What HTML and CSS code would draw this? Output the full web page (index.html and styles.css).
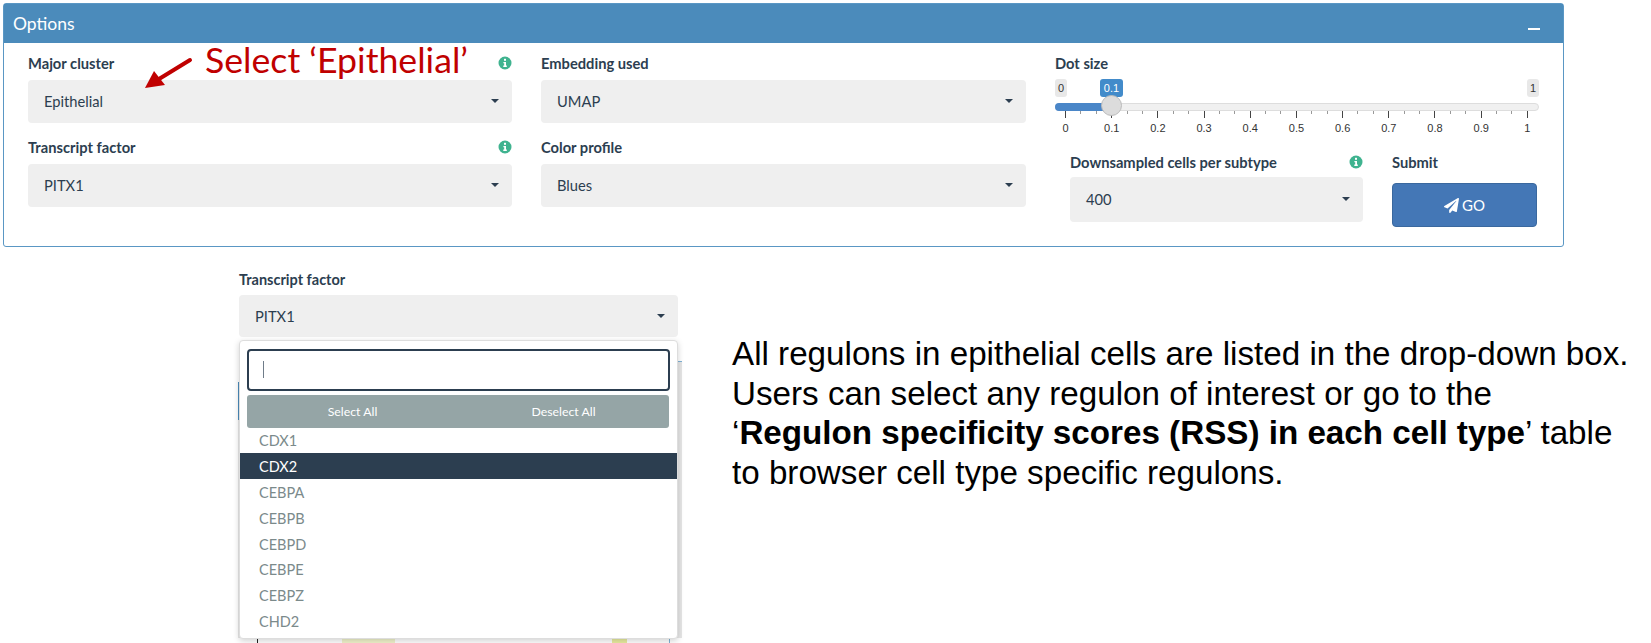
FILE: index.html
```html
<!DOCTYPE html>
<html lang="en">
<head>
    <meta charset="UTF-8">
    <meta name="viewport" content="width=device-width, initial-scale=1.0">
    <title>Options</title>
    <link rel="stylesheet" href="styles.css">
</head>
<body>
    <section class="panel">
        <div class="panel-head">
            <span>Options</span>
            <span class="collapse"></span>
        </div>
        <div class="panel-body">
            <div class="col">
                <div class="field">
                    <div class="label-row">
                        <label>Major cluster</label>
                        <svg class="info" viewBox="0 0 14 14"><circle cx="7" cy="7" r="6.5"/><rect x="6" y="2.8" width="2" height="2"/><path d="M5.4 5.9H8v3.6h.8v1.4H5.3V9.500h.9V7.300h-.8z"/></svg>
                    </div>
                    <div class="select"><span>Epithelial</span><i class="caret"></i></div>
                </div>
                <div class="field">
                    <div class="label-row">
                        <label>Transcript factor</label>
                        <svg class="info" viewBox="0 0 14 14"><circle cx="7" cy="7" r="6.5"/><rect x="6" y="2.8" width="2" height="2"/><path d="M5.4 5.9H8v3.6h.8v1.4H5.3V9.500h.9V7.300h-.8z"/></svg>
                    </div>
                    <div class="select"><span>PITX1</span><i class="caret"></i></div>
                </div>
            </div>
            <div class="col">
                <div class="field">
                    <div class="label-row"><label>Embedding used</label></div>
                    <div class="select"><span>UMAP</span><i class="caret"></i></div>
                </div>
                <div class="field">
                    <div class="label-row"><label>Color profile</label></div>
                    <div class="select"><span>Blues</span><i class="caret"></i></div>
                </div>
            </div>
            <div class="col">
                <div class="label-row"><label>Dot size</label></div>
                <div class="slider">
                    <div class="caps"><span>0</span><span>1</span></div>
                    <span class="cap-value">0.1</span>
                    <div class="track"><div class="fill"></div></div>
                    <span class="handle"></span>
                    <div class="ticks">
                        <i class="major"></i><i></i><i></i><i class="major"></i><i></i><i></i>
                        <i class="major"></i><i></i><i></i><i class="major"></i><i></i><i></i>
                        <i class="major"></i><i></i><i></i><i class="major"></i><i></i><i></i>
                        <i class="major"></i><i></i><i></i><i class="major"></i><i></i><i></i>
                        <i class="major"></i><i></i><i></i><i class="major"></i><i></i><i></i>
                        <i class="major"></i>
                    </div>
                    <div class="tick-labels">
                        <span>0</span><span>0.1</span><span>0.2</span><span>0.3</span><span>0.4</span><span>0.5</span>
                        <span>0.6</span><span>0.7</span><span>0.8</span><span>0.9</span><span>1</span>
                    </div>
                </div>
                <div class="sub-row">
                    <div class="sub-field">
                        <div class="label-row">
                            <label>Downsampled cells per subtype</label>
                            <svg class="info" viewBox="0 0 14 14"><circle cx="7" cy="7" r="6.5"/><rect x="6" y="2.8" width="2" height="2"/><path d="M5.4 5.9H8v3.6h.8v1.4H5.3V9.500h.9V7.300h-.8z"/></svg>
                        </div>
                        <div class="select tall"><span>400</span><i class="caret"></i></div>
                    </div>
                    <div class="submit-field">
                        <div class="label-row"><label>Submit</label></div>
                        <button class="go" type="button">
                            <svg viewBox="0 0 512 512"><path d="M476 3.200L12.500 270.600c-18.100 10.400-15.800 35.600 2.200 43.200L121 358.400l287.300-253.200c5.500-4.900 13.300 2.600 8.600 8.300L176 407v80.500c0 23.600 28.500 32.900 42.500 15.800L282 426l124.600 52.200c14.200 6 30.400-2.900 33-18.200l72-432C515 7.800 493.300-6.800 476 3.200z"/></svg>GO
                        </button>
                    </div>
                </div>
            </div>
        </div>
        <!-- annotation drawn over the panel -->
        <div class="note">Select ‘Epithelial’</div>
        <svg class="note-arrow" viewBox="0 0 52 34">
            <path d="M47 3 L16 22" stroke="#c00000" stroke-width="4" stroke-linecap="round"/>
            <path d="M2 31 L11 14 L22 28 Z" fill="#c00000"/>
        </svg>
    </section>

    <div class="lower">
        <div class="widget">
            <!-- what shows of the page behind the open menu -->
            <div class="behind">
                <span class="behind-line"></span>
                <span class="behind-right"></span>
                <span class="behind-left"></span>
                <span class="behind-tab"></span>
                <span class="behind-axis"></span>
                <span class="behind-edge"></span>
                <span class="behind-dots one"></span>
                <span class="behind-dots two"></span>
            </div>
            <label class="widget-label">Transcript factor</label>
            <div class="select open"><span>PITX1</span><i class="caret"></i></div>
            <div class="menu">
                <div class="search"><span class="cursor"></span></div>
                <div class="actions"><span>Select All</span><span>Deselect All</span></div>
                <ul class="options">
                    <li>CDX1</li>
                    <li class="active">CDX2</li>
                    <li>CEBPA</li>
                    <li>CEBPB</li>
                    <li>CEBPD</li>
                    <li>CEBPE</li>
                    <li>CEBPZ</li>
                    <li>CHD2</li>
                </ul>
            </div>
        </div>
        <div class="desc">
            <p>All regulons in epithelial cells are listed in the drop-down box.</p>
            <p>Users can select any regulon of interest or go to the</p>
            <p>‘<b>Regulon specificity scores (RSS) in each cell type</b>’ table</p>
            <p>to browser cell type specific regulons.</p>
        </div>
    </div>
</body>
</html>
```

FILE: styles.css
```css
html, body {
    height: 643px;
    overflow: hidden;
}
body {
    margin: 0;
    padding-top: 3px;
    box-sizing: border-box;
    background-color: white;
    font-family: Lato, "Open Sans", sans-serif;
    color: #2c3e50;
}

/* options panel */
.panel {
    position: relative;
    box-sizing: border-box;
    width: 1561px;
    height: 244px;
    margin-left: 3px;
    border: 1px solid #5a97c4;
    border-radius: 3px;
}
.panel-head {
    display: flex;
    justify-content: space-between;
    align-items: center;
    box-sizing: border-box;
    height: 39px;
    padding: 0 23px 1px 9px;
    background-color: #4b8bbb;
    color: white;
    font-size: 17.5px;
}
.collapse {
    width: 12px;
    height: 2px;
    margin-top: 11px;
    background-color: white;
}
.panel-body {
    display: grid;
    grid-template-columns: 484px 485px 484px;
    column-gap: 29px;
    padding: 10px 0 0 24px;
}
.field + .field {
    margin-top: 14px;
}
.label-row {
    display: flex;
    justify-content: space-between;
    align-items: center;
    height: 20px;
}
label {
    font-size: 14.7px;
    font-weight: bold;
    color: #2c3e50;
}
.info {
    width: 14px;
    height: 14px;
}
.info circle {
    fill: #3fb38f;
}
.info rect, .info path {
    fill: white;
}
.select {
    display: flex;
    justify-content: space-between;
    align-items: center;
    box-sizing: border-box;
    height: 43px;
    margin-top: 7px;
    padding: 0 13px 1px 16px;
    background-color: #efefef;
    border-radius: 4px;
    font-size: 14.7px;
}
.select.tall {
    height: 45px;
    margin-top: 5px;
}
.caret {
    width: 0;
    height: 0;
    border-left: 4px solid transparent;
    border-right: 4px solid transparent;
    border-top: 4px solid #2c3e50;
}

/* dot size slider */
.slider {
    position: relative;
    margin-top: 6px;
}
.caps {
    display: flex;
    justify-content: space-between;
    height: 18px;
}
.caps span, .cap-value {
    padding: 0 3px;
    border-radius: 3px;
    background-color: #e8e8e8;
    color: #333;
    font-family: "Liberation Sans", Arial, sans-serif;
    font-size: 11px;
    line-height: 18px;
}
.cap-value {
    position: absolute;
    top: 0;
    left: 45px;
    width: 17px;
    text-align: center;
    background-color: #428bca;
    color: white;
}
.track {
    height: 8px;
    margin-top: 6px;
    border: 1px solid #ddd;
    box-sizing: border-box;
    border-radius: 5px;
    background-color: #f0f0f0;
}
.fill {
    width: 56px;
    height: 8px;
    margin: -1px;
    border-radius: 5px 0 0 5px;
    background-color: #4a86c8;
}
.handle {
    position: absolute;
    top: 16px;
    left: 46px;
    box-sizing: border-box;
    width: 21px;
    height: 21px;
    border: 1px solid #bbb;
    border-radius: 50%;
    background-color: #dcdcdc;
}
.ticks, .tick-labels {
    display: flex;
    justify-content: space-between;
    padding: 0 11px 0 10px;
}
.ticks {
    height: 7px;
    align-items: flex-start;
}
.ticks i {
    width: 1px;
    height: 3px;
    background-color: #999;
}
.ticks i.major {
    height: 7px;
    background-color: #444;
}
.tick-labels {
    margin-top: 3px;
    height: 14px;
    font-family: "Liberation Sans", Arial, sans-serif;
    font-size: 11px;
    line-height: 14px;
    color: #333;
}
.tick-labels span {
    display: flex;
    justify-content: center;
    width: 1px;
    white-space: nowrap;
}
.sub-row {
    display: flex;
    margin-top: 17px;
    padding-left: 15px;
}
.sub-field {
    width: 293px;
}
.submit-field {
    width: 145px;
    margin-left: 29px;
}
.go {
    display: flex;
    justify-content: center;
    align-items: center;
    gap: 3px;
    box-sizing: border-box;
    width: 145px;
    height: 44px;
    margin-top: 11px;
    background-color: #4477b6;
    border: 1px solid #3a689e;
    border-radius: 4px;
    color: white;
    font-family: Lato, sans-serif;
    font-size: 15px;
}
.go svg {
    width: 15px;
    height: 15px;
    fill: white;
}

/* red annotation */
.note {
    position: absolute;
    top: 36px;
    left: 201px;
    color: #c00000;
    font-family: Lato, sans-serif;
    font-size: 35.7px;
    line-height: 40px;
    white-space: nowrap;
}
.note-arrow {
    position: absolute;
    top: 53px;
    left: 139px;
    width: 52px;
    height: 34px;
}

/* open dropdown and description */
.lower {
    display: flex;
    margin-top: 23px;
}
.widget {
    position: relative;
    width: 439px;
    margin-left: 239px;
}
.widget-label {
    display: block;
    height: 20px;
    font-size: 14.5px;
    line-height: 20px;
}
.widget .select.open {
    height: 42px;
    margin-top: 5px;
}
.menu {
    position: relative;
    box-sizing: border-box;
    height: 299px;
    margin-top: 3px;
    padding: 8px 0 0;
    border: 1px solid #ddd;
    border-radius: 4px;
    background-color: white;
    box-shadow: 0 2px 6px rgba(0, 0, 0, 0.18);
}
.search {
    box-sizing: border-box;
    height: 42px;
    margin: 0 7px;
    padding: 10px 14px;
    border: 2px solid #2c3e50;
    border-radius: 4px;
}
.cursor {
    display: block;
    width: 1px;
    height: 17px;
    background-color: #6f7c89;
}
.actions {
    display: flex;
    height: 33px;
    margin: 4px 8px 0 7px;
    border-radius: 3px;
    background-color: #95a5a6;
    color: white;
    font-size: 12.3px;
    line-height: 34px;
    text-align: center;
}
.actions span {
    flex: 1;
}
.options {
    margin: -1px 0 0;
    padding: 0;
    list-style: none;
    font-size: 14.5px;
    color: #7b8a8b;
}
.options li {
    height: 25.9px;
    padding-left: 19px;
    line-height: 27px;
}
.options li.active {
    background-color: #2c3e50;
    color: white;
}
.behind {
    position: absolute;
    top: 62px;
    left: -1px;
    width: 444px;
    height: 311px;
}
.behind span {
    position: absolute;
}
.behind-line {
    top: 29px;
    right: 0;
    width: 5px;
    height: 1px;
    background-color: #7fb2d6;
}
.behind-right {
    top: 30px;
    right: 0;
    width: 5px;
    height: 276px;
    background-color: #e6e6e6;
}
.behind-left {
    top: 88px;
    left: 0;
    width: 2px;
    height: 218px;
    background-color: #e6e6e6;
}
.behind-tab {
    top: 50px;
    left: 0;
    width: 2px;
    height: 38px;
    background-color: #4b8bbb;
}
.behind-axis {
    top: 306px;
    left: 19px;
    width: 1px;
    height: 5px;
    background-color: #222;
}
.behind-edge {
    top: 306px;
    left: 431px;
    width: 1px;
    height: 5px;
    background-color: #7fb2d6;
}
.behind-dots {
    top: 307px;
    height: 4px;
    background-color: #f1f3cb;
}
.behind-dots.one {
    left: 104px;
    width: 53px;
}
.behind-dots.two {
    left: 374px;
    width: 15px;
    background-color: #e9ec9f;
}
.desc {
    margin: 64px 0 0 54px;
    color: black;
    font-family: "Liberation Sans", Arial, sans-serif;
    font-size: 33.2px;
    line-height: 39.7px;
    white-space: nowrap;
}
.desc p {
    margin: 0;
}
```
